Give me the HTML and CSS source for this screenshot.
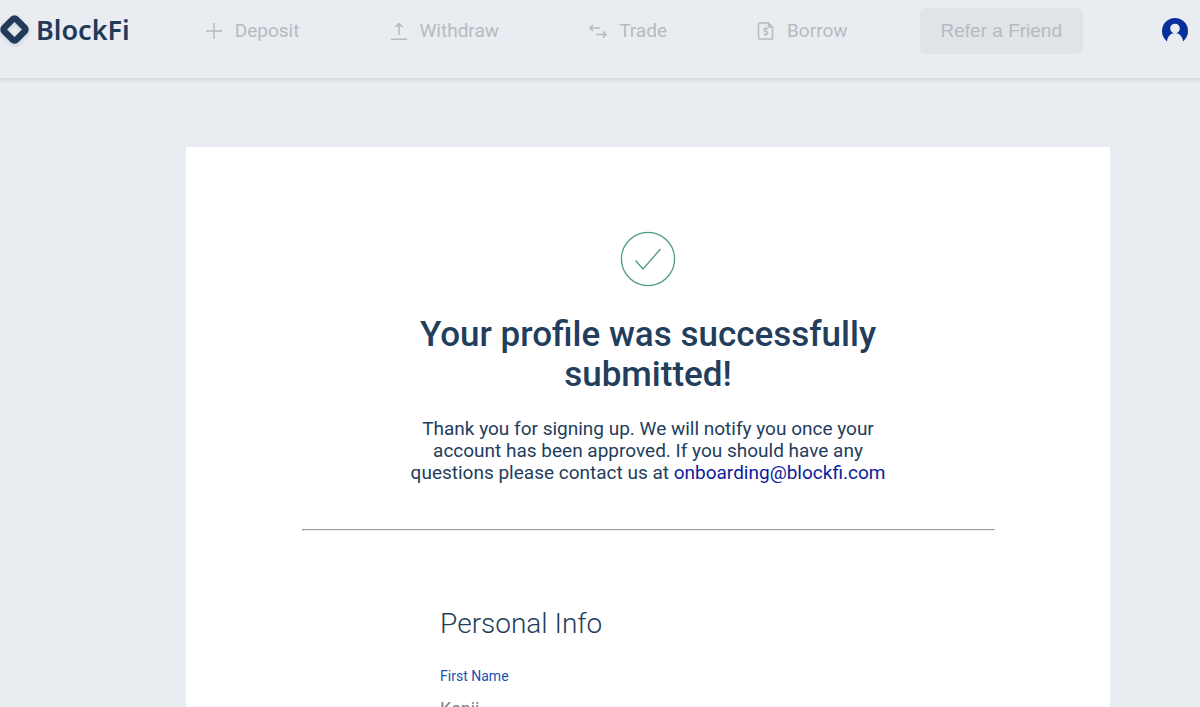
FILE: index.html
```
<!DOCTYPE html>
<html lang="en">
  <head>
    <meta charset="UTF-8" />
    <meta name="viewport" content="width=device-width, initial-scale=1.0" />
    <title>BlockFi</title>
    <link rel="stylesheet" href="styles.css">
  </head>
  <body>
    <header class="header">
      <a class="logo" href="#">
        <svg class="logo-mark" width="30" height="30" viewBox="0 0 30 30">
          <rect x="6" y="6" width="17" height="17" rx="2.500" transform="rotate(45 14.500 14.500)" fill="none" stroke="#22395a" stroke-width="6.400" />
        </svg>
        <span>BlockFi</span>
      </a>
      <nav class="nav">
        <a class="nav-link" href="#">
          <svg width="18" height="18" viewBox="0 0 18 18">
            <path d="M9 1v16M1 9h16" />
          </svg>
          Deposit
        </a>
        <a class="nav-link" href="#">
          <svg width="18" height="18" viewBox="0 0 18 18">
            <path d="M9 13V1.500M5.500 5L9 1.500L12.500 5M1 17.300h16" />
          </svg>
          Withdraw
        </a>
        <a class="nav-link" href="#">
          <svg width="18" height="18" viewBox="0 0 18 18">
            <path d="M11 6H1M4 3L1 6l3 3M7 12.500h10M14 9.500l3 3l-3 3" />
          </svg>
          Trade
        </a>
        <a class="nav-link" href="#">
          <svg width="18" height="18" viewBox="0 0 18 18">
            <path d="M2.500 1H11.500L15.500 5V17H2.500Q1.500 17 1.500 16V2Q1.500 1 2.500 1ZM11.500 1V5H15.500" />
            <path d="M10.600 7.300Q10 6.400 8.700 6.400Q7 6.400 7 7.800Q7 9 8.700 9.300Q10.700 9.700 10.700 11.100Q10.700 12.500 8.800 12.500Q7.300 12.500 6.700 11.400M8.800 5v1.400M8.800 12.500v1.500" />
          </svg>
          Borrow
        </a>
      </nav>
      <button class="refer" type="button">Refer a Friend</button>
      <button class="avatar" type="button" aria-label="Account">
        <svg width="26" height="26" viewBox="0 0 26 26">
          <circle cx="13" cy="13" r="13" fill="#062f9b" />
          <circle cx="13" cy="10.500" r="4.800" fill="#e9ecf1" />
          <path d="M5 23.500C5.500 18 9 15 13 15S20.500 18 21 23.500L19 26H7Z" fill="#e9ecf1" />
        </svg>
      </button>
    </header>
    <main class="card">
      <section class="message">
        <svg class="check" width="56" height="56" viewBox="0 0 56 56">
          <circle cx="28" cy="28" r="26.600" />
          <path d="M15.500 29.500L23 38L40.500 18" />
        </svg>
        <h1>Your profile was successfully submitted!</h1>
        <p>
          Thank you for signing up. We will notify you once your account has
          been approved. If you should have any questions please contact us at
          <a href="mailto:onboarding@blockfi.com">onboarding@blockfi.com</a>
        </p>
      </section>
      <hr class="divider" />
      <form class="info">
        <h2>Personal Info</h2>
        <label for="firstName">First Name</label>
        <input id="firstName" type="text" value="Kenji" readonly />
      </form>
    </main>
  </body>
</html>
```
FILE: styles.css
```
* {
  box-sizing: border-box;
}
body {
  margin: 0;
  background-color: #e9ecf1;
  color: #233d5c;
  font-family: Roboto, sans-serif;
}
h1,
h2,
p {
  margin: 0;
}
.header {
  display: flex;
  align-items: center;
  padding: 8px 12px 24px 0;
  box-shadow: 0 1px 5px rgba(60, 70, 90, 0.2);
}
.logo {
  display: flex;
  align-items: center;
  gap: 6px;
  padding-bottom: 2px;
  color: #22395a;
  font-family: "Noto Sans", sans-serif;
  font-size: 27px;
  font-weight: 600;
  line-height: 40px;
  text-decoration: none;
}
.logo-mark {
  filter: drop-shadow(0 2px 2px rgba(34, 57, 90, 0.15));
}
.nav {
  display: flex;
  flex: 1;
  justify-content: space-around;
  margin: 0 27px 0 30px;
}
.nav-link {
  display: flex;
  align-items: center;
  gap: 12px;
  color: #b7babf;
  font-size: 19px;
  line-height: 24px;
  text-decoration: none;
}
.nav-link svg {
  fill: none;
  stroke: #b7babf;
  stroke-width: 1.5;
}
.refer {
  padding: 12px 21px;
  border: none;
  border-radius: 5px;
  background-color: #e0e3e8;
  color: #b7babf;
  font-family: "Liberation Sans", Arial, sans-serif;
  font-size: 19px;
  line-height: 22px;
}
.avatar {
  display: flex;
  margin-left: 79px;
  padding: 0;
  border: none;
  background: none;
}
.card {
  width: 77%;
  margin: 69px 0 0 15.5%;
  padding: 84px 0;
  background-color: #fff;
}
.message {
  max-width: 480px;
  margin: 0 auto;
  text-align: center;
}
.check {
  display: block;
  margin: 0 auto 28px;
  fill: none;
  stroke: #4c9a7c;
  stroke-width: 1.3;
}
.message h1 {
  font-size: 35px;
  font-weight: 500;
  line-height: 40px;
}
.message p {
  margin-top: 23px;
  font-size: 19px;
  line-height: 22px;
}
.message a {
  color: #0a1c9c;
  text-decoration: none;
}
.divider {
  width: 75%;
  margin: 45px auto 76px;
}
.info {
  display: flex;
  flex-direction: column;
  margin: 0 27.5%;
}
.info h2 {
  font-size: 28px;
  font-weight: 300;
  line-height: 34px;
}
.info label {
  margin-top: 27px;
  color: #1a50b0;
  font-size: 14px;
  line-height: 16px;
}
.info input {
  margin-top: 14px;
  padding: 0;
  border: none;
  background: none;
  color: #7b7f85;
  font-family: Roboto, sans-serif;
  font-size: 18px;
  line-height: 22px;
}
```
